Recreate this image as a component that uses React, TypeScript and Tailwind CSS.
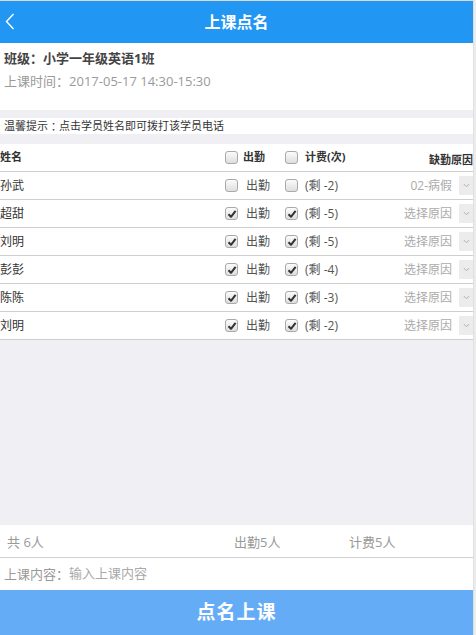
import React from "react";

type Student = { name: string; attend: boolean; fee: boolean; left: number; reason: string };

const students: Student[] = [
  { name: "孙武", attend: false, fee: false, left: -2, reason: "02-病假" },
  { name: "超甜", attend: true, fee: true, left: -5, reason: "选择原因" },
  { name: "刘明", attend: true, fee: true, left: -5, reason: "选择原因" },
  { name: "彭彭", attend: true, fee: true, left: -4, reason: "选择原因" },
  { name: "陈陈", attend: true, fee: true, left: -3, reason: "选择原因" },
  { name: "刘明", attend: true, fee: true, left: -2, reason: "选择原因" },
];

// centred full-width colon, like the YaHei rendering in the screenshot
const Colon = () => (
  <span style={{ fontFamily: '"Noto Sans CJK TC", sans-serif' }}>：</span>
);

function Checkbox({ checked }: { checked: boolean }) {
  return (
    <div className="w-[13px] h-[13px] rounded-[3px] border border-[#a9a9a9] bg-gradient-to-b from-[#fbfbfb] to-[#dedede] flex items-center justify-center shrink-0">
      {checked && (
        <svg width="10" height="10" viewBox="0 0 10 10">
          <path d="M1.5 5.2 L4 7.8 L8.6 1.8" fill="none" stroke="#333" strokeWidth="2" strokeLinejoin="round" />
        </svg>
      )}
    </div>
  );
}

export default function App() {
  return (
    <div
      lang="zh-CN"
      className="flex w-[476px] h-[635px] bg-white text-[#333]"
      style={{ fontFamily: '"Open Sans", "Noto Sans CJK SC", sans-serif' }}
    >
      <div className="flex-1 flex flex-col">
        <div className="h-px bg-[#d9d9d9]" />
        {/* header */}
        <div className="h-[42px] bg-[#2196f3] flex items-center relative">
          <svg className="absolute left-[5px] top-[12px]" width="10" height="17" viewBox="0 0 10 17">
            <path d="M8.5 1 L1.5 8.5 L8.5 16" fill="none" stroke="#fff" strokeWidth="1.4" />
          </svg>
          <div className="flex-1 text-center text-white font-bold text-[16px]">上课点名</div>
        </div>

        {/* class info */}
        <div className="h-[67px] px-[4px] pt-[5px]">
          <div className="text-[13px] font-bold text-[#444] leading-[20px]">班级<Colon />小学一年级英语1班</div>
          <div className="text-[13px] text-[#9a9a9a] leading-[20px] mt-[3px]">上课时间<Colon />2017-05-17 14:30-15:30</div>
        </div>

        <div className="h-[8px] bg-[#efeff4]" />
        <div className="h-[16px] flex items-center px-[4px] text-[11px] text-[#333]">
          温馨提示<Colon />点击学员姓名即可拨打该学员电话
        </div>
        <div className="h-[10px] bg-[#efeff4]" />

        {/* table header */}
        <div className="h-[28px] flex items-center border-b border-[#cfcfcf] text-[11px] font-bold text-[#333]">
          <div className="w-[225px]">姓名</div>
          <div className="w-[60px] flex items-center">
            <Checkbox checked={false} />
            <span className="ml-[5px]">出勤</span>
          </div>
          <div className="w-[100px] flex items-center">
            <Checkbox checked={false} />
            <span className="ml-[7px]">计费(次)</span>
          </div>
          <div className="flex-1 text-right pt-[6px]">缺勤原因</div>
        </div>

        {students.map((s, i) => (
          <div key={i} className="h-[28px] flex items-center border-b border-[#cfcfcf] text-[12px]">
            <div className="w-[225px] text-[#333]">{s.name}</div>
            <div className="w-[60px] flex items-center">
              <Checkbox checked={s.attend} />
              <span className="ml-[8px] text-[#555]">出勤</span>
            </div>
            <div className="w-[100px] flex items-center">
              <Checkbox checked={s.fee} />
              <span className="ml-[7px] text-[#555]">(剩 {s.left})</span>
            </div>
            <div className="flex-1 flex items-center justify-end">
              <span className="text-[#aaa]">{s.reason}</span>
              <div className="ml-[7px] w-[14px] h-[19px] bg-[#ececec] flex items-center justify-center">
                <svg width="7" height="5" viewBox="0 0 7 5">
                  <path d="M0.8 1 L3.5 3.8 L6.2 1" fill="none" stroke="#b0b0b0" strokeWidth="1" />
                </svg>
              </div>
            </div>
          </div>
        ))}

        <div className="flex-1 bg-[#efeff4]" />

        {/* footer stats */}
        <div className="h-[33px] flex items-end pb-[5px] border-b border-[#d0d0d0] text-[13px] text-[#999]">
          <div className="w-[234px] pl-[7px]">共 6人</div>
          <div className="w-[115px]">出勤5人</div>
          <div>计费5人</div>
        </div>
        <div className="h-[32px] flex items-center px-[4px] text-[13px]">
          <span className="text-[#999]">上课内容<Colon /></span>
          <span className="text-[#aaa]">输入上课内容</span>
        </div>
        <button className="h-[45px] bg-[#65acf7] text-white font-bold text-[19px] tracking-[1px]">点名上课</button>
      </div>
      <div className="w-[3px] bg-[#ececec] border-l border-[#e0e0e0]" />
    </div>
  );
}
